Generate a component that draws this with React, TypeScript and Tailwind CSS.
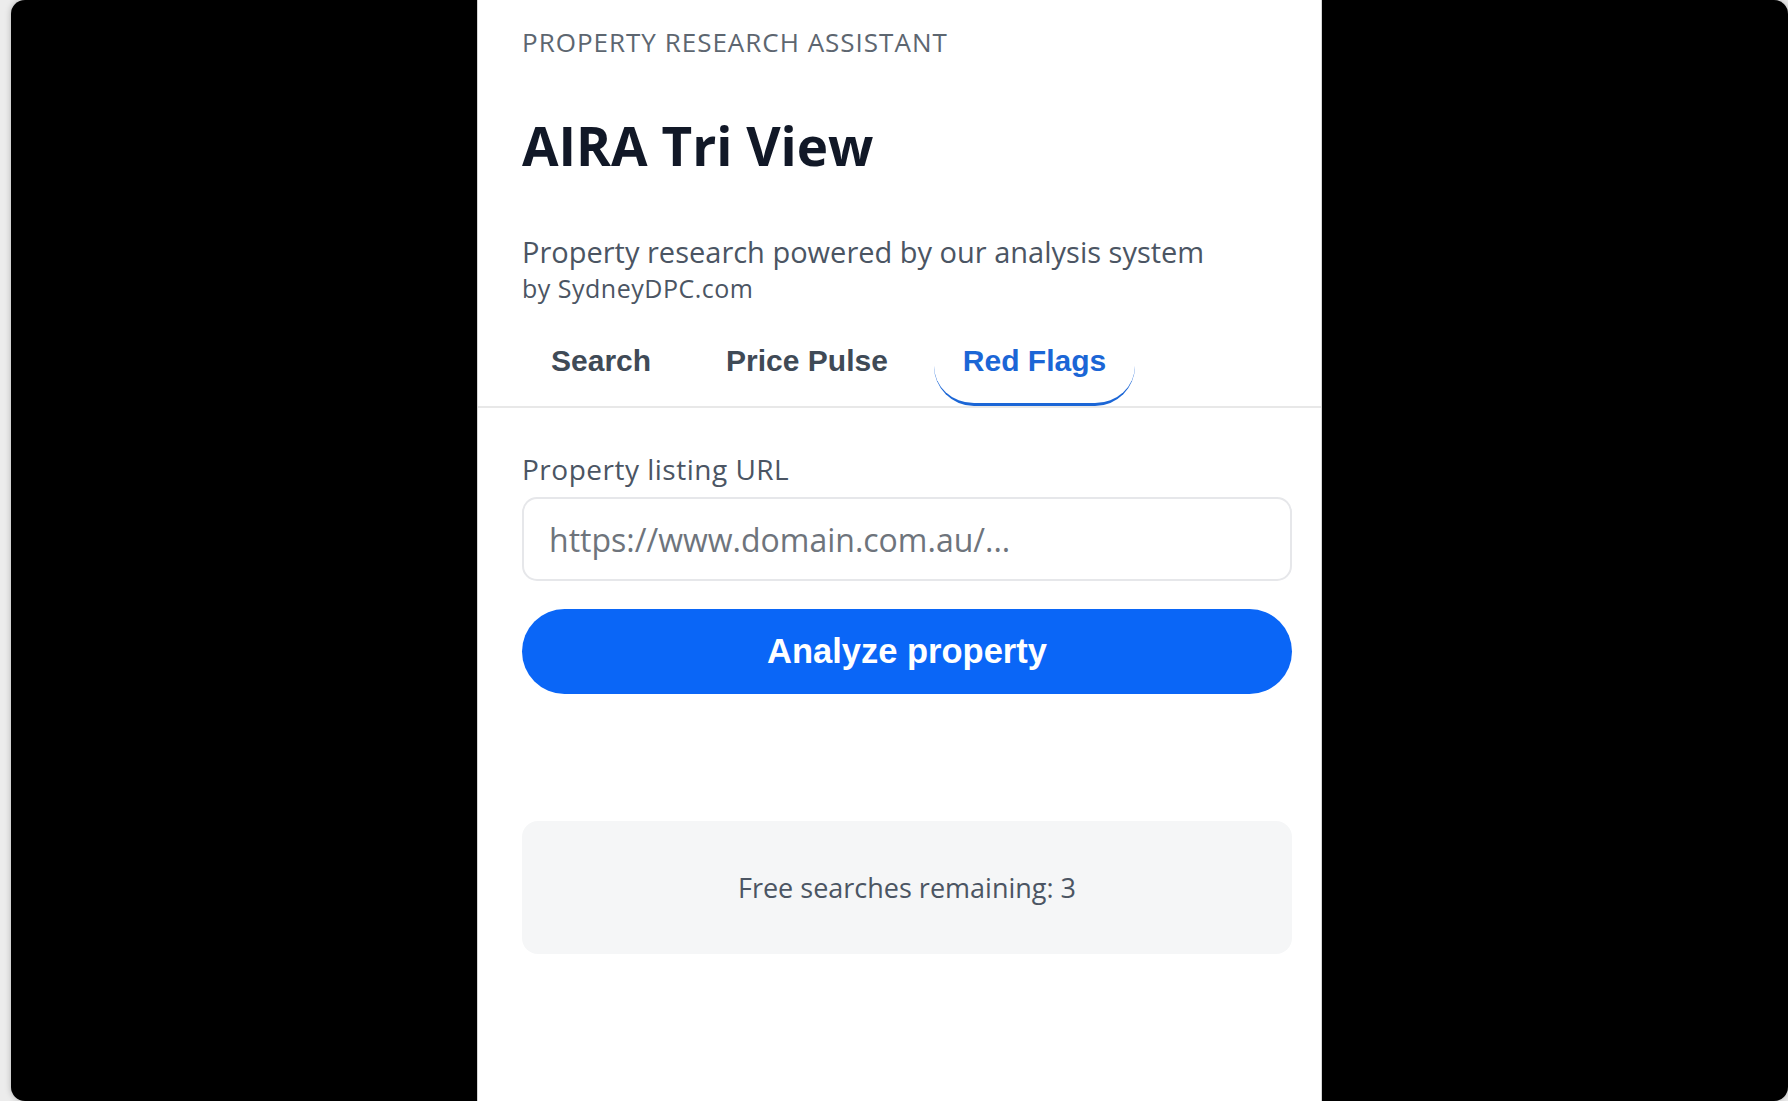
import React from "react";

export default function App() {
  return (
    <div className="w-[1788px] h-[1101px] bg-[#ececec] pl-[11px] overflow-hidden">
      <div className="h-full bg-black rounded-[14px] flex justify-center shadow-[0_0_6px_rgba(0,0,0,0.25)]">
        <div className="w-[845px] h-full bg-white border-x border-[#d4d4d4] flex flex-col font-['Open_Sans',sans-serif]">
          <div className="pl-[44px] pr-[29px] pt-[27px] flex flex-col">
            <div className="text-[26px] leading-[30px] tracking-[1px] text-[#5d6670]">
              PROPERTY RESEARCH ASSISTANT
            </div>
            <h1 className="mt-[57px] text-[53px] leading-[64px] font-bold text-[#111827]">
              AIRA Tri View
            </h1>
            <p className="mt-[58px] text-[29px] leading-[32px] text-[#4b5563]">
              Property research powered by our analysis system
            </p>
            <p className="mt-[6px] text-[25px] leading-[28px] tracking-[0.5px] text-[#4b5563]">
              by SydneyDPC.com
            </p>
          </div>

          <div className="mt-[17px] pl-[44px] flex gap-[17px] border-b-2 border-[#e8e8e8] font-['Liberation_Sans',Arial,sans-serif]">
            <button className="px-[29px] py-[25px] text-[30px] leading-[34px] font-bold text-[#3f4a56] border-b-[3px] border-transparent">
              Search
            </button>
            <button className="px-[29px] py-[25px] text-[30px] leading-[34px] font-bold text-[#3f4a56] border-b-[3px] border-transparent">
              Price Pulse
            </button>
            <button className="px-[29px] py-[25px] text-[30px] leading-[34px] font-bold text-[#1b66d6] border-b-[3px] border-[#1b66d6] rounded-b-[40px]">
              Red Flags
            </button>
          </div>

          <div className="pl-[44px] pr-[29px] flex flex-col">
            <label className="mt-[46px] text-[28px] leading-[30px] tracking-[0.5px] text-[#4b5563]">
              Property listing URL
            </label>
            <input
              className="mt-[13px] h-[84px] w-full rounded-[15px] border-2 border-[#e6e7ea] bg-white pl-[25px] text-[32px] text-[#374151] placeholder:text-[#6e747c] outline-none"
              placeholder="https://www.domain.com.au/..."
            />
            <button className="mt-[28px] h-[85px] w-full rounded-full bg-[#0a66f7] text-white text-[34.5px] font-bold font-['Liberation_Sans',Arial,sans-serif]">
              Analyze property
            </button>

            <div className="mt-[127px] h-[133px] rounded-[16px] bg-[#f5f6f7] flex items-center justify-center">
              <span className="text-[27px] leading-[32px] text-[#4b5563]">
                Free searches remaining: 3
              </span>
            </div>
          </div>
        </div>
      </div>
    </div>
  );
}
